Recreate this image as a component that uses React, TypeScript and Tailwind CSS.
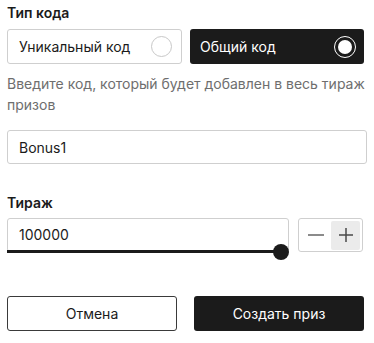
import React from 'react'

const App: React.FC = () => {
  return (
    <div className="w-[374px] h-[343px] bg-white px-[7px] pt-[4px] text-[#1b1b1b]" style={{ fontFamily: 'Inter, "Noto Sans", sans-serif' }}>
      {/* Code type */}
      <div className="text-[14px] font-semibold leading-[18px]">Тип кода</div>
      <div className="mt-[7px] flex gap-[8px]">
        <button className="flex h-[35px] w-[175px] items-center justify-between rounded-[3px] border border-[#cfcfcf] bg-white pl-[11px] pr-[9px] text-[14px]">
          Уникальный код
          <span className="h-[21px] w-[21px] rounded-full border border-[#c8c8c8]"></span>
        </button>
        <button className="flex h-[35px] w-[174px] items-center justify-between rounded-[3px] bg-[#1b1b1b] pl-[10px] pr-[8px] text-[14px] text-white">
          Общий код
          <span className="flex h-[22px] w-[22px] items-center justify-center rounded-full border-[1.5px] border-white">
            <span className="h-[14px] w-[14px] rounded-full bg-white"></span>
          </span>
        </button>
      </div>
      <p className="mt-[9px] text-[14px] leading-[21px] text-[#6e6e6e]">
        Введите код, который будет добавлен в весь тираж призов
      </p>
      <input
        className="mt-[15px] h-[34px] w-full rounded-[3px] border border-[#cfcfcf] px-[11px] text-[14px] outline-none"
        defaultValue="Bonus1"
        readOnly
      />

      {/* Circulation */}
      <div className="mt-[30px] text-[14px] font-semibold leading-[18px]">Тираж</div>
      <div className="mt-[6px] flex items-start gap-[9px]">
        <div className="relative h-[34px] w-[282px] rounded-[3px] border border-[#cfcfcf]">
          <div className="px-[11px] pt-[6px] text-[14px] leading-[20px]">100000</div>
          <div className="absolute left-[-1px] right-[8px] bottom-[-2px] h-[3px] bg-[#1b1b1b]"></div>
          <div className="absolute right-[-1px] bottom-[-9px] h-[16px] w-[16px] rounded-full bg-[#1b1b1b]"></div>
        </div>
        <div className="flex h-[34px] w-[65px] items-center justify-between rounded-[3px] border border-[#cfcfcf] pl-[8px] pr-[2px]">
          <svg width="18" height="18" viewBox="0 0 18 18">
            <path d="M1 9h16" stroke="#6e6e6e" strokeWidth="1.6" />
          </svg>
          <div className="flex h-[29px] w-[29px] items-center justify-center rounded-[2px] bg-[#ebebeb]">
            <svg width="14" height="14" viewBox="0 0 14 14">
              <path d="M0 7h14M7 0v14" stroke="#4a4a4a" strokeWidth="1.5" />
            </svg>
          </div>
        </div>
      </div>

      {/* Actions */}
      <div className="mt-[44px] flex gap-[17px]">
        <button className="h-[35px] w-[170px] rounded-[3px] border border-[#3a3a3a] bg-white text-[14px]">Отмена</button>
        <button className="h-[35px] w-[170px] rounded-[3px] bg-[#1b1b1b] text-[14px] text-white">Создать приз</button>
      </div>
    </div>
  )
}

export default App
